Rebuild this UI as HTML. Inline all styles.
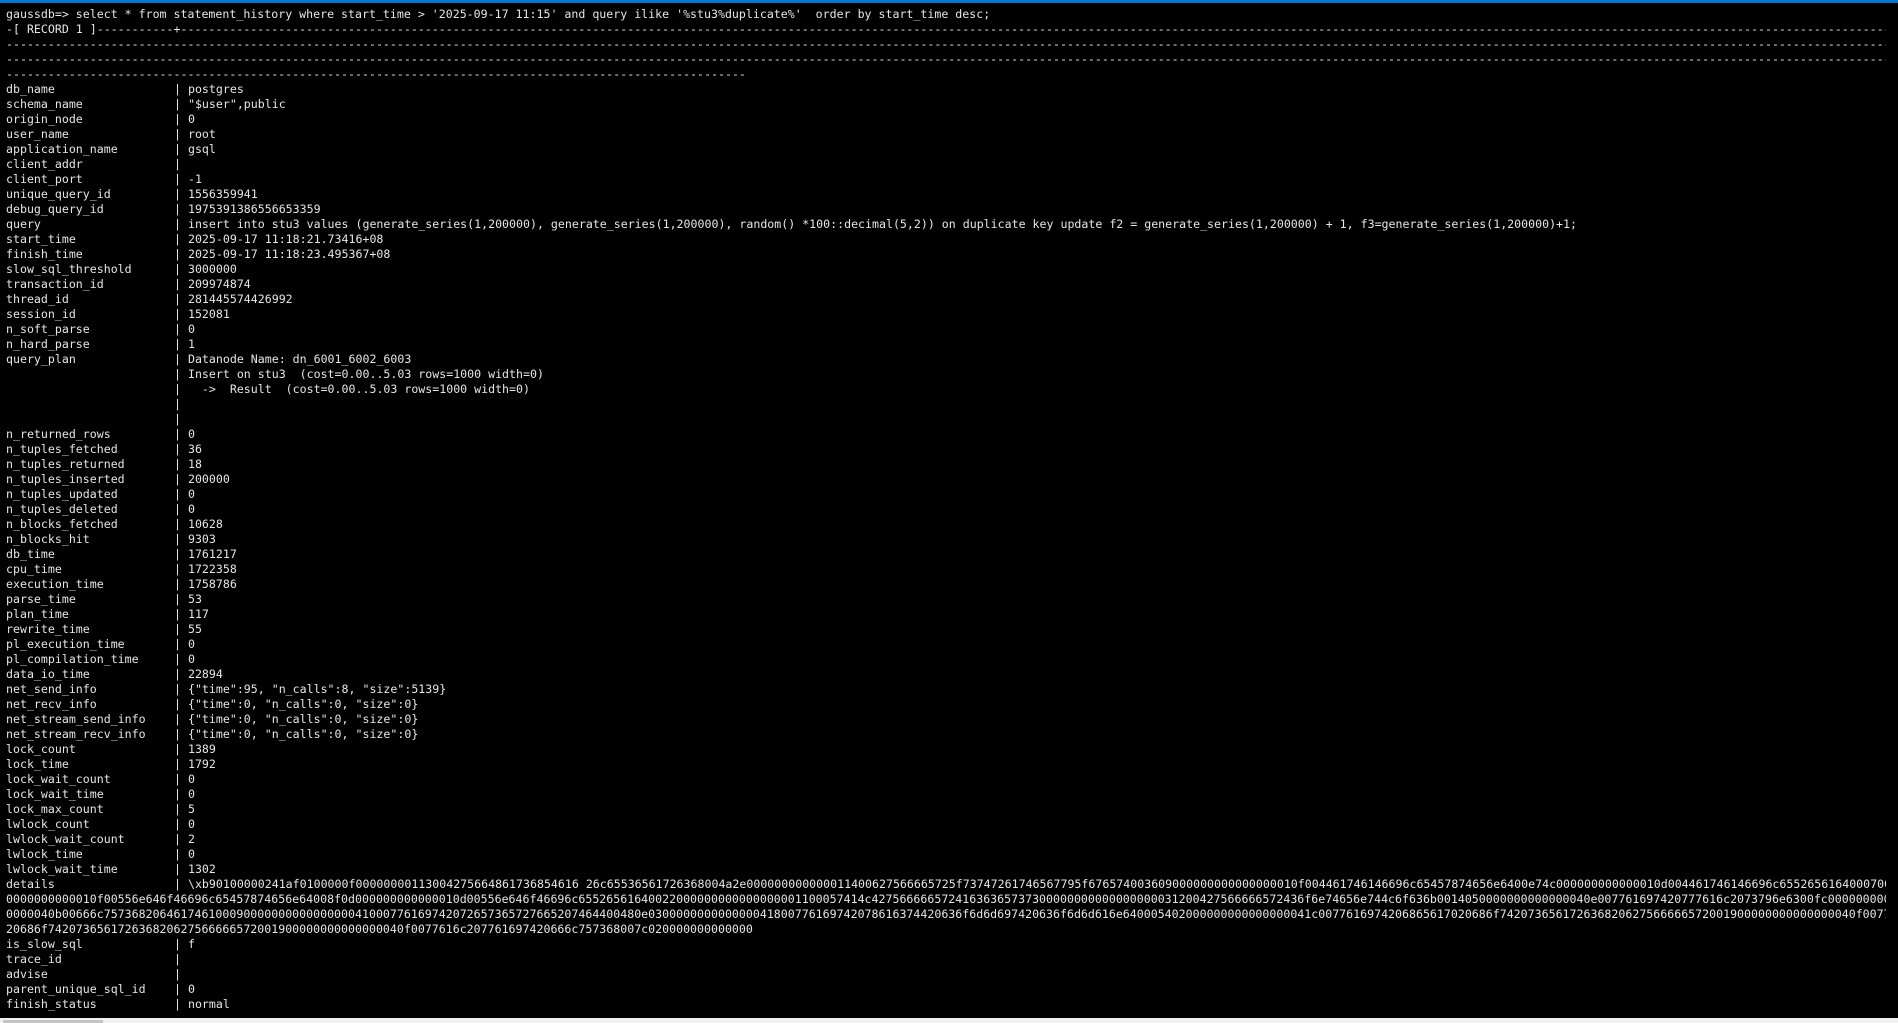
<!DOCTYPE html>
<html><head><meta charset="utf-8">
<style>
html,body{margin:0;padding:0;width:1898px;height:1023px;overflow:hidden;background:#f0f0f0;}
#top{position:absolute;left:0;top:0;width:1898px;height:3px;background:#0078d4;}
#term{position:absolute;left:0;top:3px;width:1898px;height:1015px;background:#000;overflow:hidden;}
#txt{position:absolute;left:6px;top:4px;width:1880px;overflow:hidden;font-family:"DejaVu Sans Mono","Liberation Mono",monospace;font-size:11.6px;line-height:15px;color:#e6e6e6;}
.r{height:15px;overflow:hidden;white-space:pre;}
.n{display:inline-block;width:168px;}
#thumb{position:absolute;left:3px;top:1020px;width:100px;height:3px;background:#c4c4c4;}
</style></head><body>
<div id="top"></div>
<div id="term"><div id="txt">
<div class="r">gaussdb=&gt; select * from statement_history where start_time &gt; '2025-09-17 11:15' and query ilike '%stu3%duplicate%'  order by start_time desc;</div>
<div class="r">-[ RECORD 1 ]-----------+--------------------------------------------------------------------------------------------------------------------------------------------------------------------------------------------------------------------------------------------------------------------------------------------</div>
<div class="r">--------------------------------------------------------------------------------------------------------------------------------------------------------------------------------------------------------------------------------------------------------------------------------------------</div>
<div class="r">--------------------------------------------------------------------------------------------------------------------------------------------------------------------------------------------------------------------------------------------------------------------------------------------</div>
<div class="r">----------------------------------------------------------------------------------------------------------</div>
<div class="r"><span class="n">db_name</span>| postgres</div>
<div class="r"><span class="n">schema_name</span>| "$user",public</div>
<div class="r"><span class="n">origin_node</span>| 0</div>
<div class="r"><span class="n">user_name</span>| root</div>
<div class="r"><span class="n">application_name</span>| gsql</div>
<div class="r"><span class="n">client_addr</span>|</div>
<div class="r"><span class="n">client_port</span>| -1</div>
<div class="r"><span class="n">unique_query_id</span>| 1556359941</div>
<div class="r"><span class="n">debug_query_id</span>| 1975391386556653359</div>
<div class="r"><span class="n">query</span>| insert into stu3 values (generate_series(1,200000), generate_series(1,200000), random() *100::decimal(5,2)) on duplicate key update f2 = generate_series(1,200000) + 1, f3=generate_series(1,200000)+1;</div>
<div class="r"><span class="n">start_time</span>| 2025-09-17 11:18:21.73416+08</div>
<div class="r"><span class="n">finish_time</span>| 2025-09-17 11:18:23.495367+08</div>
<div class="r"><span class="n">slow_sql_threshold</span>| 3000000</div>
<div class="r"><span class="n">transaction_id</span>| 209974874</div>
<div class="r"><span class="n">thread_id</span>| 281445574426992</div>
<div class="r"><span class="n">session_id</span>| 152081</div>
<div class="r"><span class="n">n_soft_parse</span>| 0</div>
<div class="r"><span class="n">n_hard_parse</span>| 1</div>
<div class="r"><span class="n">query_plan</span>| Datanode Name: dn_6001_6002_6003</div>
<div class="r"><span class="n"></span>| Insert on stu3  (cost=0.00..5.03 rows=1000 width=0)</div>
<div class="r"><span class="n"></span>|   -&gt;  Result  (cost=0.00..5.03 rows=1000 width=0)</div>
<div class="r"><span class="n"></span>|</div>
<div class="r"><span class="n"></span>|</div>
<div class="r"><span class="n">n_returned_rows</span>| 0</div>
<div class="r"><span class="n">n_tuples_fetched</span>| 36</div>
<div class="r"><span class="n">n_tuples_returned</span>| 18</div>
<div class="r"><span class="n">n_tuples_inserted</span>| 200000</div>
<div class="r"><span class="n">n_tuples_updated</span>| 0</div>
<div class="r"><span class="n">n_tuples_deleted</span>| 0</div>
<div class="r"><span class="n">n_blocks_fetched</span>| 10628</div>
<div class="r"><span class="n">n_blocks_hit</span>| 9303</div>
<div class="r"><span class="n">db_time</span>| 1761217</div>
<div class="r"><span class="n">cpu_time</span>| 1722358</div>
<div class="r"><span class="n">execution_time</span>| 1758786</div>
<div class="r"><span class="n">parse_time</span>| 53</div>
<div class="r"><span class="n">plan_time</span>| 117</div>
<div class="r"><span class="n">rewrite_time</span>| 55</div>
<div class="r"><span class="n">pl_execution_time</span>| 0</div>
<div class="r"><span class="n">pl_compilation_time</span>| 0</div>
<div class="r"><span class="n">data_io_time</span>| 22894</div>
<div class="r"><span class="n">net_send_info</span>| {"time":95, "n_calls":8, "size":5139}</div>
<div class="r"><span class="n">net_recv_info</span>| {"time":0, "n_calls":0, "size":0}</div>
<div class="r"><span class="n">net_stream_send_info</span>| {"time":0, "n_calls":0, "size":0}</div>
<div class="r"><span class="n">net_stream_recv_info</span>| {"time":0, "n_calls":0, "size":0}</div>
<div class="r"><span class="n">lock_count</span>| 1389</div>
<div class="r"><span class="n">lock_time</span>| 1792</div>
<div class="r"><span class="n">lock_wait_count</span>| 0</div>
<div class="r"><span class="n">lock_wait_time</span>| 0</div>
<div class="r"><span class="n">lock_max_count</span>| 5</div>
<div class="r"><span class="n">lwlock_count</span>| 0</div>
<div class="r"><span class="n">lwlock_wait_count</span>| 2</div>
<div class="r"><span class="n">lwlock_time</span>| 0</div>
<div class="r"><span class="n">lwlock_wait_time</span>| 1302</div>
<div class="r"><span class="n">details</span>| \xb90100000241af0100000f00000000113004275664861736854616 26c65536561726368004a2e000000000000011400627566665725f73747261746567795f676574003609000000000000000010f004461746146696c65457874656e6400e74c000000000000010d004461746146696c655265616400070000000000</div>
<div class="r">0000000000010f00556e646f46696c65457874656e64008f0d000000000000010d00556e646f46696c65526561640022000000000000000001100057414c42756666657241636365737300000000000000000031200427566666572436f6e74656e744c6f636b0014050000000000000040e007761697420777616c2073796e6300fc0000000000000</div>
<div class="r">0000040b00666c75736820646174610009000000000000000041000776169742072657365727665207464400480e030000000000000041800776169742078616374420636f6d6d697420636f6d6d616e640005402000000000000000041c0077616974206865617020686f742073656172636820627566666572001900000000000000040f0077616c</div>
<div class="r">20686f742073656172636820627566666572001900000000000000040f0077616c207761697420666c757368007c020000000000000</div>
<div class="r"><span class="n">is_slow_sql</span>| f</div>
<div class="r"><span class="n">trace_id</span>|</div>
<div class="r"><span class="n">advise</span>|</div>
<div class="r"><span class="n">parent_unique_sql_id</span>| 0</div>
<div class="r"><span class="n">finish_status</span>| normal</div>
</div></div>
<div id="thumb"></div>
</body></html>
